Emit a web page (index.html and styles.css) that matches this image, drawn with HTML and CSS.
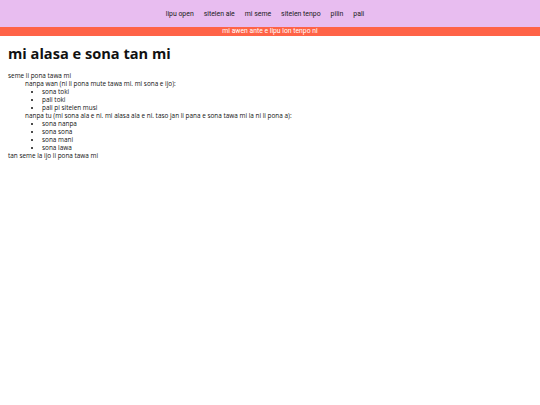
FILE: index.html
```html
<!DOCTYPE html>
<html>
<head>
<meta charset="utf-8">
<link rel="stylesheet" href="styles.css">
</head>
<body>
<header class="topbar">
  <nav class="nav">
    <a class="nav-link" href="#">lipu open</a>
    <a class="nav-link" href="#">sitelen ale</a>
    <a class="nav-link" href="#">mi seme</a>
    <a class="nav-link" href="#">sitelen tenpo</a>
    <a class="nav-link" href="#">pilin</a>
    <a class="nav-link" href="#">pali</a>
  </nav>
  <div class="notice">mi awen ante e lipu lon tenpo ni</div>
</header>
<main class="content">
  <h1 class="title">mi alasa e sona tan mi</h1>
  <div class="outline">
    <div class="line">seme li pona tawa mi</div>
    <div class="indent">
      <div class="line">nanpa wan (ni li pona mute tawa mi. mi sona e ijo):</div>
      <ul class="items">
        <li>sona toki</li>
        <li>pali toki</li>
        <li>pali pi sitelen musi</li>
      </ul>
      <div class="line">nanpa tu (mi sona ala e ni. mi alasa ala e ni. taso jan li pana e sona tawa mi la ni li pona a):</div>
      <ul class="items">
        <li>sona nanpa</li>
        <li>sona sona</li>
        <li>sona mani</li>
        <li>sona lawa</li>
      </ul>
    </div>
    <div class="line">tan seme la ijo li pona tawa mi</div>
  </div>
</main>
</body>
</html>
```

FILE: styles.css
```css
html, body {
  margin: 0;
  padding: 0;
  background: #ffffff;
  font-family: "Open Sans", "Noto Sans", sans-serif;
  color: #111111;
}

.topbar {
  display: flex;
  flex-direction: column;
}

.nav {
  background: #e8bdf0;
  height: 27px;
  display: flex;
  justify-content: center;
  align-items: center;
  gap: 10px;
  padding-right: 10px;
  font-family: Roboto, "Open Sans", sans-serif;
}

.nav-link {
  color: #1a1a1a;
  text-decoration: none;
  font-size: 6.9px;
}

.notice {
  background: #ff6347;
  color: #ffffff;
  height: 9px;
  line-height: 9px;
  font-size: 6.8px;
  font-family: Roboto, "Open Sans", sans-serif;
  text-align: center;
}

.content {
  padding: 0 8px;
}

.title {
  margin: 7px 0 9px 0;
  font-size: 14.6px;
  font-weight: 700;
  line-height: 20px;
}

.outline {
  font-size: 6.4px;
  line-height: 8px;
}

.indent {
  padding-left: 17px;
}

.items {
  margin: 0;
  padding-left: 17px;
}
```
